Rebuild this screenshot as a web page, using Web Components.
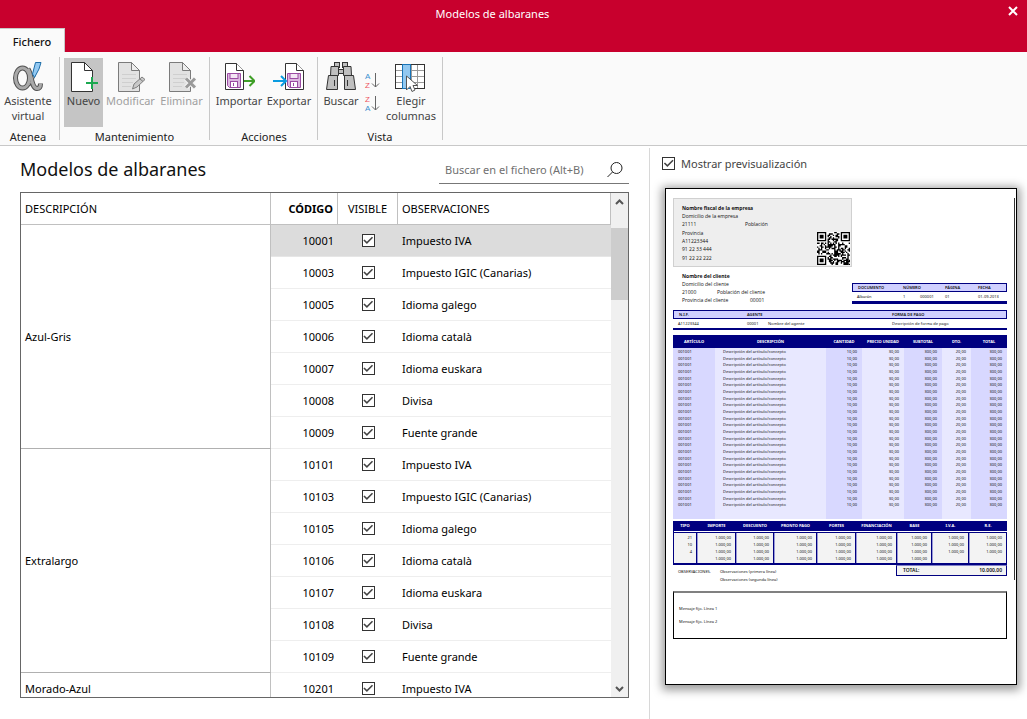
<!DOCTYPE html>
<html lang="es">
<head>
<meta charset="utf-8">
<meta name="viewport" content="width=device-width, initial-scale=1">
<title>Modelos de albaranes</title>
<style>
html,body{margin:0;height:100%;background:#fff;color:#111;font:11px/15px "Noto Sans","Open Sans",sans-serif}
</style>
</head>
<body>
<models-app></models-app>
<script>
const define = (name, html, setup) => {
  const template = document.createElement('template');
  template.innerHTML = html;
  customElements.define(name, class extends HTMLElement {
    constructor() {
      super();
      const root = this.attachShadow({ mode: 'open' });
      root.append(template.content.cloneNode(true));
    }
    connectedCallback() {
      if (setup && !this.ready) { this.ready = true; setup(this, this.shadowRoot); }
    }
  });
};

/* ---------- icons ---------- */
const sheetPath = 'M3.5 1.5H16.5L24.5 9.5V30.5H3.5Z';
const foldPath = 'M16.5 1.5V9.5H24.5Z';
const greyLines = '<path d="M7 13.5H21M7 17.5H21M7 21.5H18M7 25.5H16" stroke="#cfcfcf"/>';
const savedDoc = x => `<g transform="translate(${x} 0)"><path d="M.5 2.5H11.5L18.5 9.5V28.5H.5Z" fill="#fff" stroke="#333"/><path d="M11.5 2.5V9.5H18.5" fill="#fff" stroke="#333"/>
<path d="M2.5 12.5H15.5V26.5H4.5L2.5 24.5Z" fill="#dcb8e0" stroke="#9b4ba3"/><rect x="5" y="12.5" width="8" height="5" fill="#f3e6f4" stroke="#9b4ba3"/><rect x="5.5" y="20.5" width="7" height="6" fill="#fff" stroke="#9b4ba3"/><path d="M8.500 22V25" stroke="#9b4ba3"/></g>`;
const sortIcon = (a, ca, b, cb) => `<text x="5" y="8" font-family="Liberation Sans,sans-serif" font-size="8" fill="${ca}">${a}</text><text x="5" y="17" font-family="Liberation Sans,sans-serif" font-size="8" fill="${cb}">${b}</text><path d="M15.500 2V16M12 12.500L15.500 16L19 12.500" fill="none" stroke="#666"/>`;
const icons = {
  alpha: [32, 32, `<g fill="none" stroke-linecap="butt"><ellipse cx="10.500" cy="17" rx="7" ry="10" stroke="#505050" stroke-width="5"/><path d="M24 8C22 15 20 20 17 24" stroke="#505050" stroke-width="3"/><path d="M16 8C20 13 19 27 25 27.500C28 27.500 28.500 25 28.500 22.500" stroke="#505050" stroke-width="5"/><ellipse cx="10.500" cy="17" rx="7" ry="10" stroke="#a9a9a9" stroke-width="3"/><path d="M24 8C22 15 20 20 17 24" stroke="#a9a9a9"/><path d="M16 8C20 13 19 27 25 27.500C28 27.500 28.500 25 28.500 23" stroke="#a9a9a9" stroke-width="3"/></g><path d="M23.500 1.500H29L27 8L22.500 16.500L20.500 13Z" fill="#93c9f2" stroke="#1d6da8"/>`],
  add: [31, 32, `<path d="${sheetPath}" fill="#fff" stroke="#333"/><path d="${foldPath}" fill="#fff" stroke="#333"/><path d="M22.500 14V32M17 22H31" stroke="#c5c5c5" stroke-width="0"/><path d="M24 16V28M18 22H30" stroke="#1ca850" stroke-width="2"/>`],
  edit: [31, 32, `<path d="${sheetPath}" fill="#e2e2e2" stroke="#7b7b7b"/><path d="${foldPath}" fill="#eee" stroke="#7b7b7b"/>${greyLines}<path d="M17.500 28L19 23L27 16L30 18.500L22 26Z" fill="#c8c8c8" stroke="#808080"/><path d="M25 18L28 20.500" stroke="#808080"/>`],
  remove: [31, 32, `<path d="${sheetPath}" fill="#e2e2e2" stroke="#7b7b7b"/><path d="${foldPath}" fill="#eee" stroke="#7b7b7b"/>${greyLines}<path d="M20 17.500L29 26.500M29 17.500L20 26.500" stroke="#f5f5f5" stroke-width="5"/><path d="M20 17.500L29 26.500M29 17.500L20 26.500" stroke="#9a9a9a" stroke-width="3"/>`],
  import: [32, 32, savedDoc(2) + '<path d="M21 20H31M26.500 15L31.500 20L26.500 25" fill="none" stroke="#3f9f27" stroke-width="2"/>'],
  export: [32, 32, savedDoc(12) + '<path d="M0 20H13M8 15L13 20L8 25" fill="none" stroke="#0a9be0" stroke-width="2"/>'],
  find: [32, 32, `<g fill="#bfbfbf" stroke="#333"><rect x="9.500" y="1.500" width="5" height="5"/><rect x="17.500" y="1.500" width="5" height="5"/><rect x="13.500" y="8.500" width="5" height="4"/><path d="M6 5.500H13.500V14.500H5.500Z"/><path d="M26 5.500H18.500V14.500H26.500Z"/><path d="M3.500 14.500H12.500V28.500H1.500Z"/><path d="M28.500 14.500H19.500V28.500H30.500Z"/><path d="M9.500 19V25M22.500 19V25"/></g>`],
  asc: [24, 18, sortIcon('A', '#3c91d0', 'Z', '#ed5560')],
  desc: [24, 18, sortIcon('Z', '#ed5560', 'A', '#3c91d0')],
  columns: [32, 32, `<rect x=".5" y="3.500" width="29" height="24" fill="#fff" stroke="#333"/><path d="M1 9.500H29M1 15.500H29M1 21.500H29M16.500 4V27M22.500 4V27" stroke="#9a9a9a"/><rect x="7.500" y="3.500" width="8" height="24" fill="#92c8f0" stroke="#1874b8"/><path d="M11.500 15V29L15 25.500L17 30.500L20 29L18 24.500H22.500Z" fill="#fff" stroke="#555"/>`],
  lens: [18, 18, '<circle cx="10.500" cy="7" r="5.500" fill="none" stroke="#222"/><path d="M6.500 11L1.500 16" stroke="#222"/>'],
  close: [10, 10, '<path d="M1 1L9 9M9 1L1 9" stroke="#fff" stroke-width="2"/>'],
  up: [9, 6, '<path d="M1 5L4.500 1.500L8 5" fill="none" stroke="#555" stroke-width="2"/>'],
  down: [9, 6, '<path d="M1 1L4.500 4.500L8 1" fill="none" stroke="#555" stroke-width="2"/>']
};
define('ui-icon', '<style>:host{display:block}svg{display:block}</style>', (host, root) => {
  const [w, h, body] = icons[host.getAttribute('name')];
  root.innerHTML += `<svg width="${w}" height="${h}" viewBox="0 0 ${w} ${h}" aria-hidden="true">${body}</svg>`;
});

/* ---------- check box ---------- */
define('check-box', `<style>
:host{display:inline-block}
label{display:flex;align-items:center;gap:6px}
input{appearance:none;margin:0;width:13px;height:13px;box-sizing:border-box;border:1px solid #333;background:#fff;display:grid}
input:checked::after{content:"";background:#444;clip-path:polygon(8% 50%,18% 40%,40% 62%,86% 16%,96% 26%,40% 82%)}
</style><label><input type="checkbox" checked><slot></slot></label>`, (host, root) => {
  const name = host.getAttribute('aria-label');
  if (name) root.querySelector('input').setAttribute('aria-label', name);
});

/* ---------- title bar ---------- */
define('title-bar', `<style>
:host{display:grid;grid-template-columns:1fr 42px;grid-template-rows:28px 24px;background:#c8002d;color:#fff}
.title{text-align:center;line-height:28px}
button{border:0;padding:0 9px 6px 0;background:none;display:flex;justify-content:flex-end;align-items:center}
nav{grid-column:1/3;display:flex}
a{box-sizing:border-box;width:65px;padding-top:5px;text-align:center;background:#fafafa;border:solid #c8c8c8;border-width:1px 1px 0 0;color:#111;font-weight:500;text-decoration:none}
</style><div class="title"><slot></slot></div><button aria-label="Cerrar"><ui-icon name="close"></ui-icon></button>
<nav><a href="#fichero">Fichero</a></nav>`);

/* ---------- ribbon ---------- */
define('ribbon-group', `<style>
:host{display:flex;flex-direction:column;position:relative;padding:0 5px 0 4px}
:host::after{content:"";position:absolute;top:1px;right:0;bottom:5px;width:1px;background:#c8c8c8}
.items{flex:none;display:flex;height:69px;padding-top:2px}
.label{line-height:17px;padding-top:1px;text-align:center;color:#222}
:host([flush]){padding:0 4px 0 0}
:host([tight]){padding-right:4px}
</style><div class="items"><slot></slot></div><div class="label"></div>`, (host, root) => {
  root.querySelector('.label').textContent = host.getAttribute('label');
});
define('ribbon-button', `<style>
:host{display:block}
button{width:100%;height:100%;border:0;margin:0;padding:3px 0 0;background:none;font:inherit;color:#444;display:flex;flex-direction:column;align-items:center;white-space:nowrap}
:host([active]) button{background:#c5c5c5}
button:disabled{color:#a0a0a0}
span{text-align:center}
</style><button><span><slot></slot></span></button>`, (host, root) => {
  const button = root.querySelector('button');
  const icon = document.createElement('ui-icon');
  button.disabled = host.hasAttribute('disabled');
  icon.setAttribute('name', host.getAttribute('icon'));
  button.prepend(icon);
});
define('ribbon-bar', `<style>
:host{display:flex;height:89px;padding-top:4px;background:#fafafa;border-bottom:1px solid #c8c8c8;color:#222}
.w38{width:38px}.w39{width:39px}.w47{width:47px}.w50{width:50px}.w54{width:54px}.w55{width:55px}.w56{width:56px}
.sort{width:24px;display:flex;flex-direction:column;gap:5px;padding-top:13px}
.sort button{border:0;padding:0;background:none;font:inherit}
</style>
<ribbon-group label="Atenea" flush><ribbon-button class="w56" icon="alpha">Asistente<br>virtual</ribbon-button></ribbon-group>
<ribbon-group label="Mantenimiento"><ribbon-button class="w39" icon="add" active>Nuevo</ribbon-button><ribbon-button class="w55" icon="edit" disabled>Modificar</ribbon-button><ribbon-button class="w47" icon="remove" disabled>Eliminar</ribbon-button></ribbon-group>
<ribbon-group label="Acciones" tight><ribbon-button class="w50" icon="import">Importar</ribbon-button><ribbon-button class="w50" icon="export">Exportar</ribbon-button></ribbon-group>
<ribbon-group label="Vista"><ribbon-button class="w38" icon="find">Buscar</ribbon-button><div class="sort"><button aria-label="Orden ascendente"><ui-icon name="asc"></ui-icon></button><button aria-label="Orden descendente"><ui-icon name="desc"></ui-icon></button></div><ribbon-button class="w54" icon="columns">Elegir<br>columnas</ribbon-button></ribbon-group>`);

/* ---------- search ---------- */
define('search-box', `<style>
:host{display:flex;align-items:center;width:190px;height:28px;box-sizing:border-box;border-bottom:1px solid #777}
input{flex:1;min-width:0;border:0;outline:0;padding:0 0 0 6px;background:none;font:inherit;color:#333}
input::placeholder{color:#707070;opacity:1}
button{border:0;background:none;padding:0 5px 0 0}
</style><input type="search" aria-label="Buscar en el fichero" placeholder="Buscar en el fichero (Alt+B)"><button aria-label="Buscar"><ui-icon name="lens"></ui-icon></button>`);

/* ---------- scroll bar ---------- */
define('scroll-rail', `<style>
:host{display:flex;flex-direction:column;width:17px;background:#f0f0f0}
button{border:0;padding:0;height:17px;background:none;display:grid;place-items:center}
.track{flex:1;padding-top:18px}
.thumb{height:72px;background:#cdcdcd}
</style><button aria-label="Subir"><ui-icon name="up"></ui-icon></button><div class="track"><div class="thumb"></div></div><button aria-label="Bajar"><ui-icon name="down"></ui-icon></button>`);

/* ---------- models table ---------- */
const notes = [['01', 'Impuesto IVA'], ['03', 'Impuesto IGIC (Canarias)'], ['05', 'Idioma galego'], ['06', 'Idioma català'], ['07', 'Idioma euskara'], ['08', 'Divisa'], ['09', 'Fuente grande']];
const groups = [['Azul-Gris', '100', notes], ['Extralargo', '101', notes], ['Morado-Azul', '102', notes.slice(0, 1)]];
define('models-table', `<style>
:host{display:flex;min-height:0;border:1px solid #666;background:#fff}
.view{flex:1;overflow:hidden}
table{width:100%;border-collapse:separate;border-spacing:0;table-layout:fixed;color:#000}
th,td{box-sizing:border-box;height:32px;padding:0 4px;text-align:left;font-weight:400;border-bottom:1px solid #eee}
thead th{border-bottom:1px solid #c0c0c0;border-right:1px solid #c0c0c0}
thead .code{font-weight:700}
tbody th{border-right:1px solid #c0c0c0;border-bottom-color:#b0b0b0}
.desc{width:250px}.code{width:67px;text-align:right}.vis{width:60px;text-align:center}
td.vis check-box{display:block;width:13px;margin:0 auto}
tr.sel td{background:#dcdcdc;border-bottom-color:#e6e6e6}
</style><div class="view"><table><thead><tr><th class="desc">DESCRIPCIÓN</th><th class="code">CÓDIGO</th><th class="vis">VISIBLE</th><th>OBSERVACIONES</th></tr></thead><tbody></tbody></table></div><scroll-rail></scroll-rail>`, (host, root) => {
  root.querySelector('tbody').innerHTML = groups.map(([name, prefix, list], g) => list.map(([n, text], i) =>
    `<tr${g + i === 0 ? ' class="sel"' : ''}>${i ? '' : `<th scope="rowgroup" rowspan="${list.length}">${name}</th>`}<td class="code">${prefix + n}</td><td class="vis"><check-box aria-label="Visible ${prefix + n}"></check-box></td><td>${text}</td></tr>`).join('')).join('');
});

/* ---------- QR code ---------- */
define('qr-code', '<style>:host{display:block;width:33px;height:33px}svg{display:block}</style>', (host, root) => {
  const size = 25;
  let seed = 77, d = '';
  const finder = (x, y) => {
    const r = Math.max(Math.abs(x - 3), Math.abs(y - 3));
    return r === 4 ? 0 : r === 3 || r < 2 ? 1 : r === 2 ? 0 : -1;
  };
  for (let y = 0; y < size; y++) for (let x = 0; x < size; x++) {
    seed = (seed * 1103515245 + 12345) % 2147483648;
    const marks = [finder(x, y), finder(x - 18, y), finder(x, y - 18)].filter(v => v >= 0);
    if (marks.length ? marks[0] : (seed >> 12) % 100 < 52) d += `M${x} ${y}h1v1h-1z`;
  }
  root.innerHTML += `<svg width="33" height="33" viewBox="0 0 25 25"><path fill="#fff" d="M0 0h25v25H0z"/><path d="${d}"/></svg>`;
});

/* ---------- delivery note preview ---------- */
const items = Array.from({ length: 24 }, () => '<tr><td>001001</td><td>Descripción del artículo/concepto</td><td>10,00</td><td>30,00</td><td>300,00</td><td>20,00</td><td>300,00</td></tr>').join('');
const taxes = ['21', '10', '4', ''].map(t => `<tr><td>${t}</td>` + '<td>1.000,00</td>'.repeat(6) + (t ? '<td>1.000,00</td>'.repeat(2) : '<td></td><td></td>') + '</tr>').join('');
define('note-preview', `<style>
:host{display:block;box-sizing:border-box;aspect-ratio:352/497;border:1px solid #000;background:#fff;padding:9px 1px 0 7px;box-shadow:0 2px 9px 3px rgba(0,0,0,.4);font-size:4px;line-height:8px;color:#111;white-space:nowrap}
.page{border-right:1px solid #333;height:382px;padding-right:7px}
.top{display:grid;grid-template-columns:179px 1fr}
.company{display:grid;grid-template-columns:1fr 33px;align-items:end;box-sizing:border-box;height:69px;padding:5px 1px 1px 8px;border:1px solid #d0d0d0;background:#eee}
.company,.client{font-family:"Open Sans","Noto Sans",sans-serif;font-size:5px}
p{margin:0;height:8px;display:flex}
.company p:nth-child(3n){height:9px}
i{font-style:normal;display:block}
.text{align-self:start}
.client{padding:5px 0 0 9px}
.doc{align-self:end}
table{width:100%;border-collapse:separate;border-spacing:0;table-layout:fixed}
th,td{padding:0;font-weight:600;text-align:left;overflow:hidden}
td{font-weight:400}
.band th{height:7px;line-height:7px;background:#d0d0ff;border:solid #000080;border-width:1px 0}
.band th:first-child{border-left-width:1px}.band th:last-child{border-right-width:1px}
.band td{height:9px;line-height:8px}
.band th,.band td{padding-left:5px}
.band{border-bottom:3px solid #000080}
.nif{margin-top:6px;border-bottom-width:2px}
.items{margin-top:5px}
.items th,.tax th{background:#000080;color:#fff;text-align:center;font-weight:700}
.items th{height:13px}
.items td{height:7px;line-height:7px;text-align:right;padding-right:5px;background:#e8e8ff}
.items tbody tr:nth-child(3n) td{height:6px;line-height:6px}
.items td:nth-child(odd){background:#d8d8ff}
.items td:nth-child(1),.items td:nth-child(2){text-align:left;padding-left:5px;padding-right:0}
.items td:nth-child(2){padding-left:8px}
.items tfoot td{height:11px}
.tax{margin-top:2px}
.tax th{height:10px;line-height:10px}
.tax .gap td{height:1px;line-height:1px;border:0;background:#fff}
.tax td{height:7px;line-height:7px;text-align:right;padding-right:4px;background:#f3f3f3;border-right:1px solid #000080}
.tax tbody td+td,.tax tfoot td+td{box-shadow:inset 1px 0 #9999d8}
.tax td:first-child{border-left:1px solid #000080}
.tax .first td{border-top:1px solid #000080;padding-top:1px}
.tax tfoot td{height:1px;line-height:1px;border-bottom:2px solid #000080}
.end{display:grid;grid-template-columns:1fr 111px}
.end .total{box-sizing:border-box;height:11px;padding:0 4px 0 6px;display:flex;justify-content:space-between;border:1px solid #000080;border-top-color:#8080c8;background:#f3f3f3;font-size:5px;font-weight:600}
.obs{padding:3px 0 0 5px;display:grid;grid-template-columns:42px 1fr}
.msg{box-sizing:border-box;height:48px;margin:11px 8px 0 0;padding:9px 5px;border:1px solid #000;border-top:2px solid #808080;line-height:13px}
.msg p{height:13px}
</style>
<div class="page"><div class="top">
<div><div class="company"><div class="text"><p><b>Nombre fiscal de la empresa</b></p><p>Domicilio de la empresa</p><p><i style="width:63px">21111</i>Población</p><p>Provincia</p><p>A11223344</p><p>91 22 33 444</p><p>91 22 22 222</p></div><qr-code></qr-code></div>
<div class="client"><p><b>Nombre del cliente</b></p><p>Domicilio del cliente</p><p><i style="width:35px">21000</i>Población del cliente</p><p><i style="width:68px">Provincia del cliente</i>00001</p></div></div>
<div class="doc"><table class="band"><colgroup><col style="width:46px"><col style="width:17px"><col style="width:25px"><col style="width:33px"><col></colgroup><tr><th>DOCUMENTO</th><th colspan="2">NÚMERO</th><th>PÁGINA</th><th>FECHA</th></tr><tr><td>Albarán</td><td>1</td><td>000001</td><td>01</td><td>01-09-2013</td></tr></table></div></div>
<table class="band nif"><colgroup><col style="width:69px"><col style="width:21px"><col style="width:124px"><col></colgroup><tr><th>N.I.F.</th><th colspan="2">AGENTE</th><th>FORMA DE PAGO</th></tr><tr><td>A11223344</td><td>00001</td><td>Nombre del agente</td><td>Descripción de forma de pago</td></tr></table>
<table class="items"><colgroup><col style="width:42px"><col style="width:111px"><col style="width:36px"><col style="width:42px"><col style="width:38px"><col style="width:29px"><col></colgroup><thead><tr><th>ARTÍCULO</th><th>DESCRIPCIÓN</th><th>CANTIDAD</th><th>PRECIO UNIDAD</th><th>SUBTOTAL</th><th>DTO.</th><th>TOTAL</th></tr></thead><tbody>${items}</tbody><tfoot><tr><td></td><td></td><td></td><td></td><td></td><td></td><td></td></tr></tfoot></table>
<table class="tax"><colgroup><col style="width:24px"><col style="width:39px"><col style="width:38px"><col style="width:43px"><col style="width:39px"><col style="width:41px"><col style="width:35px"><col style="width:37px"><col></colgroup><thead><tr><th>TIPO</th><th>IMPORTE</th><th>DESCUENTO</th><th>PRONTO PAGO</th><th>PORTES</th><th>FINANCIACIÓN</th><th>BASE</th><th>I.V.A.</th><th>R.E.</th></tr><tr class="gap"><td colspan="9"></td></tr></thead><tbody>${taxes.replace('<tr>', '<tr class="first">')}</tbody><tfoot><tr>${'<td></td>'.repeat(9)}</tr></tfoot></table>
<div class="end"><div class="obs"><span>OBSERVACIONES.</span><span>Observaciones (primera línea)<br>Observaciones (segunda línea)</span></div><div class="total"><span>TOTAL:</span><span>10.000,00</span></div></div></div>
<div class="msg"><p>Mensaje fijo. Línea 1</p><p>Mensaje fijo. Línea 2</p></div>`);

/* ---------- application ---------- */
define('models-app', `<style>
:host{display:flex;flex-direction:column;height:100vh;overflow:hidden}
.body{flex:1;min-height:0;display:grid;grid-template-columns:minmax(0,1fr) 377px;padding-top:2px}
main{box-sizing:border-box;display:flex;flex-direction:column;min-height:0;padding:8px 20px 21px;border-right:1px solid #d8d8d8}
.head{display:flex;justify-content:space-between;height:36px}
h1{margin:0;font-size:18px;line-height:26px;font-weight:400}
models-table{flex:1}
aside{padding:8px 10px 0 12px;color:#444}
note-preview{margin:16px 0 0 3px}
</style>
<title-bar>Modelos de albaranes</title-bar>
<ribbon-bar></ribbon-bar>
<div class="body"><main><div class="head"><h1>Modelos de albaranes</h1><search-box></search-box></div><models-table></models-table></main>
<aside><check-box>Mostrar previsualización</check-box><note-preview></note-preview></aside></div>`);
</script>
</body>
</html>
